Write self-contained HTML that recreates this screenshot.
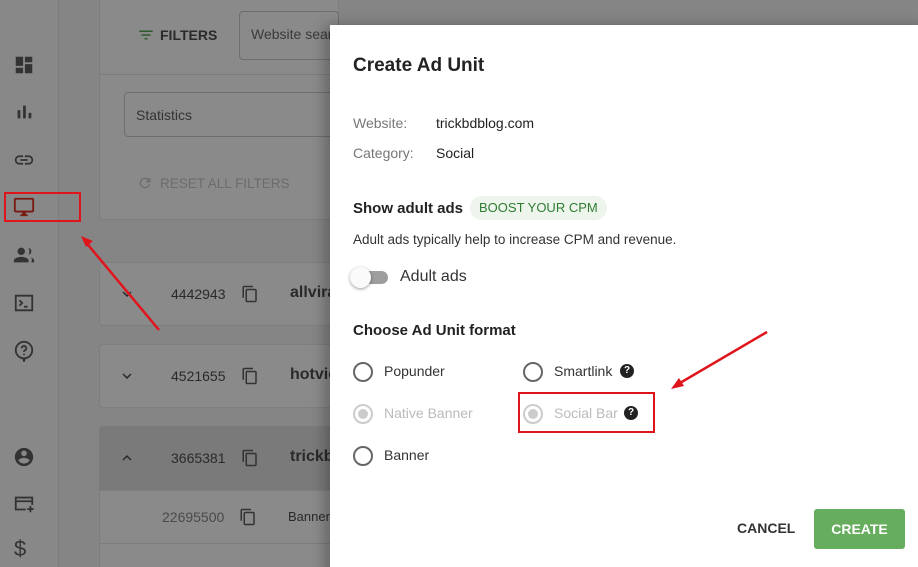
<!DOCTYPE html>
<html><head><meta charset="utf-8"><style>
*{box-sizing:border-box;margin:0;padding:0}
html,body{width:918px;height:567px;overflow:hidden}
body{position:relative;background:#858585;font-family:"Liberation Sans",sans-serif;color:#222}
.sb{position:absolute;left:0;top:0;width:59px;height:567px;background:#888;border-right:1px solid #7c7c7c}
.ic{position:absolute;left:13px;width:22px;height:22px}
.abs{position:absolute}
.card{position:absolute;left:99px;width:240px;background:#8a8a8a;border:1px solid #7e7e7e;border-radius:4px}
.t{position:absolute;font-size:14px;color:#2a2a2a;white-space:nowrap}
.modal{position:absolute;left:330px;top:25px;width:600px;height:560px;background:#fff;box-shadow:-6px 0 12px rgba(0,0,0,.25)}
.m{position:absolute;white-space:nowrap}
.radio{position:absolute;width:20px;height:20px;border:2px solid #666;border-radius:50%}
.radio.dis{border-color:#ccc}
.radio.dis::after{content:"";position:absolute;left:3px;top:3px;width:10px;height:10px;border-radius:50%;background:#ccc}
.q{position:absolute;width:14px;height:14px;border-radius:50%;background:#222;color:#fff;font-size:10px;font-weight:bold;text-align:center;line-height:14px}
</style></head><body>
<div class="sb"></div>
<svg class="ic" style="top:54px" viewBox="0 0 24 24"><path fill="#333" d="M3 13h8V3H3v10zm0 8h8v-6H3v6zm10 0h8V11h-8v10zm0-18v6h8V3h-8z"/></svg>
<svg class="ic" style="top:101px" viewBox="0 0 24 24"><path fill="#333" d="M5 10h3v9H5zm6-5h3v14h-3zm6 8h3v6h-3z"/></svg>
<svg class="ic" style="top:149px" viewBox="0 0 24 24"><path fill="#333" d="M3.9 12c0-1.7 1.4-3.1 3.1-3.1h4V7H7c-2.8 0-5 2.2-5 5s2.2 5 5 5h4v-1.9H7c-1.7 0-3.1-1.4-3.1-3.1zM8 13h8v-2H8v2zm9-6h-4v1.9h4c1.7 0 3.1 1.4 3.1 3.1s-1.4 3.1-3.1 3.1h-4V17h4c2.8 0 5-2.2 5-5s-2.2-5-5-5z"/></svg>
<svg class="ic" style="top:196px" viewBox="0 0 24 24"><path fill="#7a1a12" d="M21 2H3c-1.1 0-2 .9-2 2v12c0 1.1.9 2 2 2h7v2H8v2h8v-2h-2v-2h7c1.1 0 2-.9 2-2V4c0-1.1-.9-2-2-2zm0 14H3V4h18v12z"/></svg>
<div class="abs" style="left:4px;top:192px;width:77px;height:30px;border:2px solid #e0141b"></div>
<svg class="ic" style="top:244px" viewBox="0 0 24 24"><path fill="#333" d="M9 12c2.2 0 4-1.8 4-4s-1.8-4-4-4-4 1.8-4 4 1.8 4 4 4zm0 2c-2.7 0-8 1.3-8 4v2h16v-2c0-2.7-5.3-4-8-4zm7.8-9.6c1.4 1.5 1.4 6.2 0 7.2 2-.2 3.2-1.7 3.2-3.6s-1.2-3.4-3.2-3.6zM20 20h3v-2c0-1.5-1.5-2.7-3.5-3.4.9.9 1.5 2 .5 5.4z"/></svg>
<svg class="ic" style="top:292px" viewBox="0 0 24 24"><path fill="none" stroke="#333" stroke-width="2" d="M3 4h18v16H3z"/><path fill="none" stroke="#333" stroke-width="2" d="M7 9l3 3-3 3M12 16h4"/></svg>
<svg class="ic" style="top:340px" viewBox="0 0 24 24"><circle cx="12" cy="11" r="9" fill="none" stroke="#333" stroke-width="2"/><path fill="none" stroke="#333" stroke-width="2" d="M9.5 9a2.5 2.5 0 1 1 3.5 2.3c-.8.4-1 1-1 1.7M12 15v1.5M11 20l1 3 1-3"/></svg>
<svg class="ic" style="top:446px" viewBox="0 0 24 24"><path fill="#333" d="M12 2C6.5 2 2 6.5 2 12s4.5 10 10 10 10-4.5 10-10S17.5 2 12 2zm0 3c1.7 0 3 1.3 3 3s-1.3 3-3 3-3-1.3-3-3 1.3-3 3-3zm0 14.2c-2.5 0-4.7-1.3-6-3.2 0-2 4-3.1 6-3.1s6 1.1 6 3.1c-1.3 1.9-3.5 3.2-6 3.2z"/></svg>
<svg class="ic" style="top:493px" viewBox="0 0 24 24"><path fill="none" stroke="#333" stroke-width="2" d="M14 18H3V5h18v8M3 9h18"/><path stroke="#333" stroke-width="2" d="M19 14v7M15.5 17.5h7"/></svg>
<div class="abs" style="left:14px;top:536px;font-size:22px;color:#333">$</div>

<div class="abs" style="left:99px;top:0;width:240px;height:220px;background:#8a8a8a;border:1px solid #7e7e7e;border-top:none;border-radius:0 0 4px 4px"></div>
<div class="abs" style="left:99px;top:74px;width:240px;height:1px;background:#7c7c7c"></div>
<svg class="abs" style="left:137px;top:26px" width="18" height="18" viewBox="0 0 24 24"><path fill="#2e5a2e" d="M10 18h4v-2h-4v2zM3 6v2h18V6H3zm3 7h12v-2H6v2z"/></svg>
<div class="t" style="left:160px;top:27px;font-weight:bold;font-size:14px">FILTERS</div>
<div class="abs" style="left:239px;top:11px;width:100px;height:49px;border:1px solid #6e6e6e;border-radius:4px"></div>
<div class="t" style="left:251px;top:26px;color:#3a3a3a">Website sear</div>
<div class="abs" style="left:124px;top:92px;width:215px;height:45px;border:1px solid #6e6e6e;border-radius:4px"></div>
<div class="t" style="left:136px;top:107px;color:#333">Statistics</div>
<svg class="abs" style="left:137px;top:175px" width="16" height="16" viewBox="0 0 24 24"><path fill="#6c6c6c" d="M17.65 6.35A7.96 7.96 0 0 0 12 4a8 8 0 1 0 7.73 10h-2.08A6 6 0 1 1 12 6c1.66 0 3.14.69 4.22 1.78L13 11h7V4l-2.35 2.35z"/></svg>
<div class="t" style="left:160px;top:176px;color:#6c6c6c;font-size:13.5px">RESET ALL FILTERS</div>

<div class="card" style="top:262px;height:64px"></div>
<svg class="abs" style="left:118px;top:285px" width="18" height="18" viewBox="0 0 24 24"><path fill="#2a2a2a" d="M7.41 8.59L12 13.17l4.59-4.58L18 10l-6 6-6-6z"/></svg>
<div class="t" style="left:171px;top:286px">4442943</div>
<div class="t" style="left:290px;top:284px;font-size:16px;font-weight:bold">allvira</div>
<div class="card" style="top:344px;height:64px"></div>
<svg class="abs" style="left:118px;top:367px" width="18" height="18" viewBox="0 0 24 24"><path fill="#2a2a2a" d="M7.41 8.59L12 13.17l4.59-4.58L18 10l-6 6-6-6z"/></svg>
<div class="t" style="left:171px;top:368px">4521655</div>
<div class="t" style="left:290px;top:366px;font-size:16px;font-weight:bold">hotvic</div>
<div class="abs" style="left:99px;top:426px;width:240px;height:64px;background:#7a7a7a;border-radius:4px 4px 0 0"></div>
<div class="abs" style="left:99px;top:490px;width:240px;height:80px;background:#8a8a8a;border:1px solid #7e7e7e"></div>
<div class="abs" style="left:99px;top:543px;width:240px;height:1px;background:#7c7c7c"></div>
<svg class="abs" style="left:118px;top:449px" width="18" height="18" viewBox="0 0 24 24"><path fill="#2a2a2a" d="M7.41 15.41L12 10.83l4.59 4.58L18 14l-6-6-6 6z"/></svg>
<div class="t" style="left:171px;top:450px">3665381</div>
<div class="t" style="left:290px;top:448px;font-size:16px;font-weight:bold">trickb</div>
<div class="t" style="left:162px;top:509px;color:#4a4a4a">22695500</div>
<div class="t" style="left:288px;top:509px;font-size:13px">Banner</div>
<svg class="abs" style="left:241px;top:285px" width="18" height="18" viewBox="0 0 24 24"><path fill="#333" d="M16 1H4c-1.1 0-2 .9-2 2v14h2V3h12V1zm3 4H8c-1.1 0-2 .9-2 2v14c0 1.1.9 2 2 2h11c1.1 0 2-.9 2-2V7c0-1.1-.9-2-2-2zm0 16H8V7h11v14z"/></svg>
<svg class="abs" style="left:241px;top:367px" width="18" height="18" viewBox="0 0 24 24"><path fill="#333" d="M16 1H4c-1.1 0-2 .9-2 2v14h2V3h12V1zm3 4H8c-1.1 0-2 .9-2 2v14c0 1.1.9 2 2 2h11c1.1 0 2-.9 2-2V7c0-1.1-.9-2-2-2zm0 16H8V7h11v14z"/></svg>
<svg class="abs" style="left:241px;top:449px" width="18" height="18" viewBox="0 0 24 24"><path fill="#333" d="M16 1H4c-1.1 0-2 .9-2 2v14h2V3h12V1zm3 4H8c-1.1 0-2 .9-2 2v14c0 1.1.9 2 2 2h11c1.1 0 2-.9 2-2V7c0-1.1-.9-2-2-2zm0 16H8V7h11v14z"/></svg>
<svg class="abs" style="left:239px;top:508px" width="18" height="18" viewBox="0 0 24 24"><path fill="#333" d="M16 1H4c-1.1 0-2 .9-2 2v14h2V3h12V1zm3 4H8c-1.1 0-2 .9-2 2v14c0 1.1.9 2 2 2h11c1.1 0 2-.9 2-2V7c0-1.1-.9-2-2-2zm0 16H8V7h11v14z"/></svg>

<svg class="abs" style="left:0;top:0" width="330" height="567"><path d="M159 330L84 240" stroke="#e0141b" stroke-width="2.5"/><path d="M81 236l12 5-7 6z" fill="#e0141b"/></svg>

<div class="modal">
<div class="m" style="left:23px;top:30px;font-size:19px;font-weight:bold;color:#222">Create Ad Unit</div>
<div class="m" style="left:23px;top:90px;font-size:14px;color:#777">Website:</div>
<div class="m" style="left:106px;top:90px;font-size:14px;color:#222">trickbdblog.com</div>
<div class="m" style="left:23px;top:120px;font-size:14px;color:#777">Category:</div>
<div class="m" style="left:106px;top:120px;font-size:14px;color:#222">Social</div>
<div class="m" style="left:23px;top:175px;font-size:15px;font-weight:bold">Show adult ads</div>
<div class="m" style="left:140px;top:171px;height:24px;padding:0 9px;line-height:24px;border-radius:12px;background:#eef5ec;color:#2e7d32;font-size:13px">BOOST YOUR CPM</div>
<div class="m" style="left:23px;top:207px;font-size:13.5px;color:#333">Adult ads typically help to increase CPM and revenue.</div>
<div class="m" style="left:24px;top:246px;width:34px;height:13px;border-radius:7px;background:#9e9e9e"></div>
<div class="m" style="left:20px;top:242px;width:21px;height:21px;border-radius:50%;background:#fafafa;box-shadow:0 1px 3px rgba(0,0,0,.4)"></div>
<div class="m" style="left:70px;top:243px;font-size:16px;color:#333">Adult ads</div>
<div class="m" style="left:23px;top:297px;font-size:15px;font-weight:bold">Choose Ad Unit format</div>
<div class="radio" style="left:23px;top:337px"></div>
<div class="m" style="left:54px;top:338px;font-size:14px;color:#333">Popunder</div>
<div class="radio" style="left:193px;top:337px"></div>
<div class="m" style="left:224px;top:338px;font-size:14px;color:#333">Smartlink</div>
<div class="q" style="left:290px;top:339px">?</div>
<div class="radio dis" style="left:23px;top:379px"></div>
<div class="m" style="left:54px;top:380px;font-size:14px;color:#bbb">Native Banner</div>
<div class="radio dis" style="left:193px;top:379px"></div>
<div class="m" style="left:224px;top:380px;font-size:14px;color:#bbb">Social Bar</div>
<div class="q" style="left:294px;top:381px">?</div>
<div class="m" style="left:188px;top:367px;width:137px;height:41px;border:2px solid #e0141b"></div>
<div class="radio" style="left:23px;top:421px"></div>
<div class="m" style="left:54px;top:422px;font-size:14px;color:#333">Banner</div>
<div class="m" style="left:407px;top:495px;font-size:14px;font-weight:bold;color:#333">CANCEL</div>
<div class="m" style="left:484px;top:484px;width:91px;height:40px;background:#66ad5e;border-radius:3px;color:#fff;font-size:14px;font-weight:bold;text-align:center;line-height:40px">CREATE</div>
</div>
<svg class="abs" style="left:660px;top:325px" width="120" height="80"><path d="M107 7L20 58" stroke="#e0141b" stroke-width="2.5"/><path d="M11 64l8-11 5 8z" fill="#e0141b"/></svg>
</body></html>
